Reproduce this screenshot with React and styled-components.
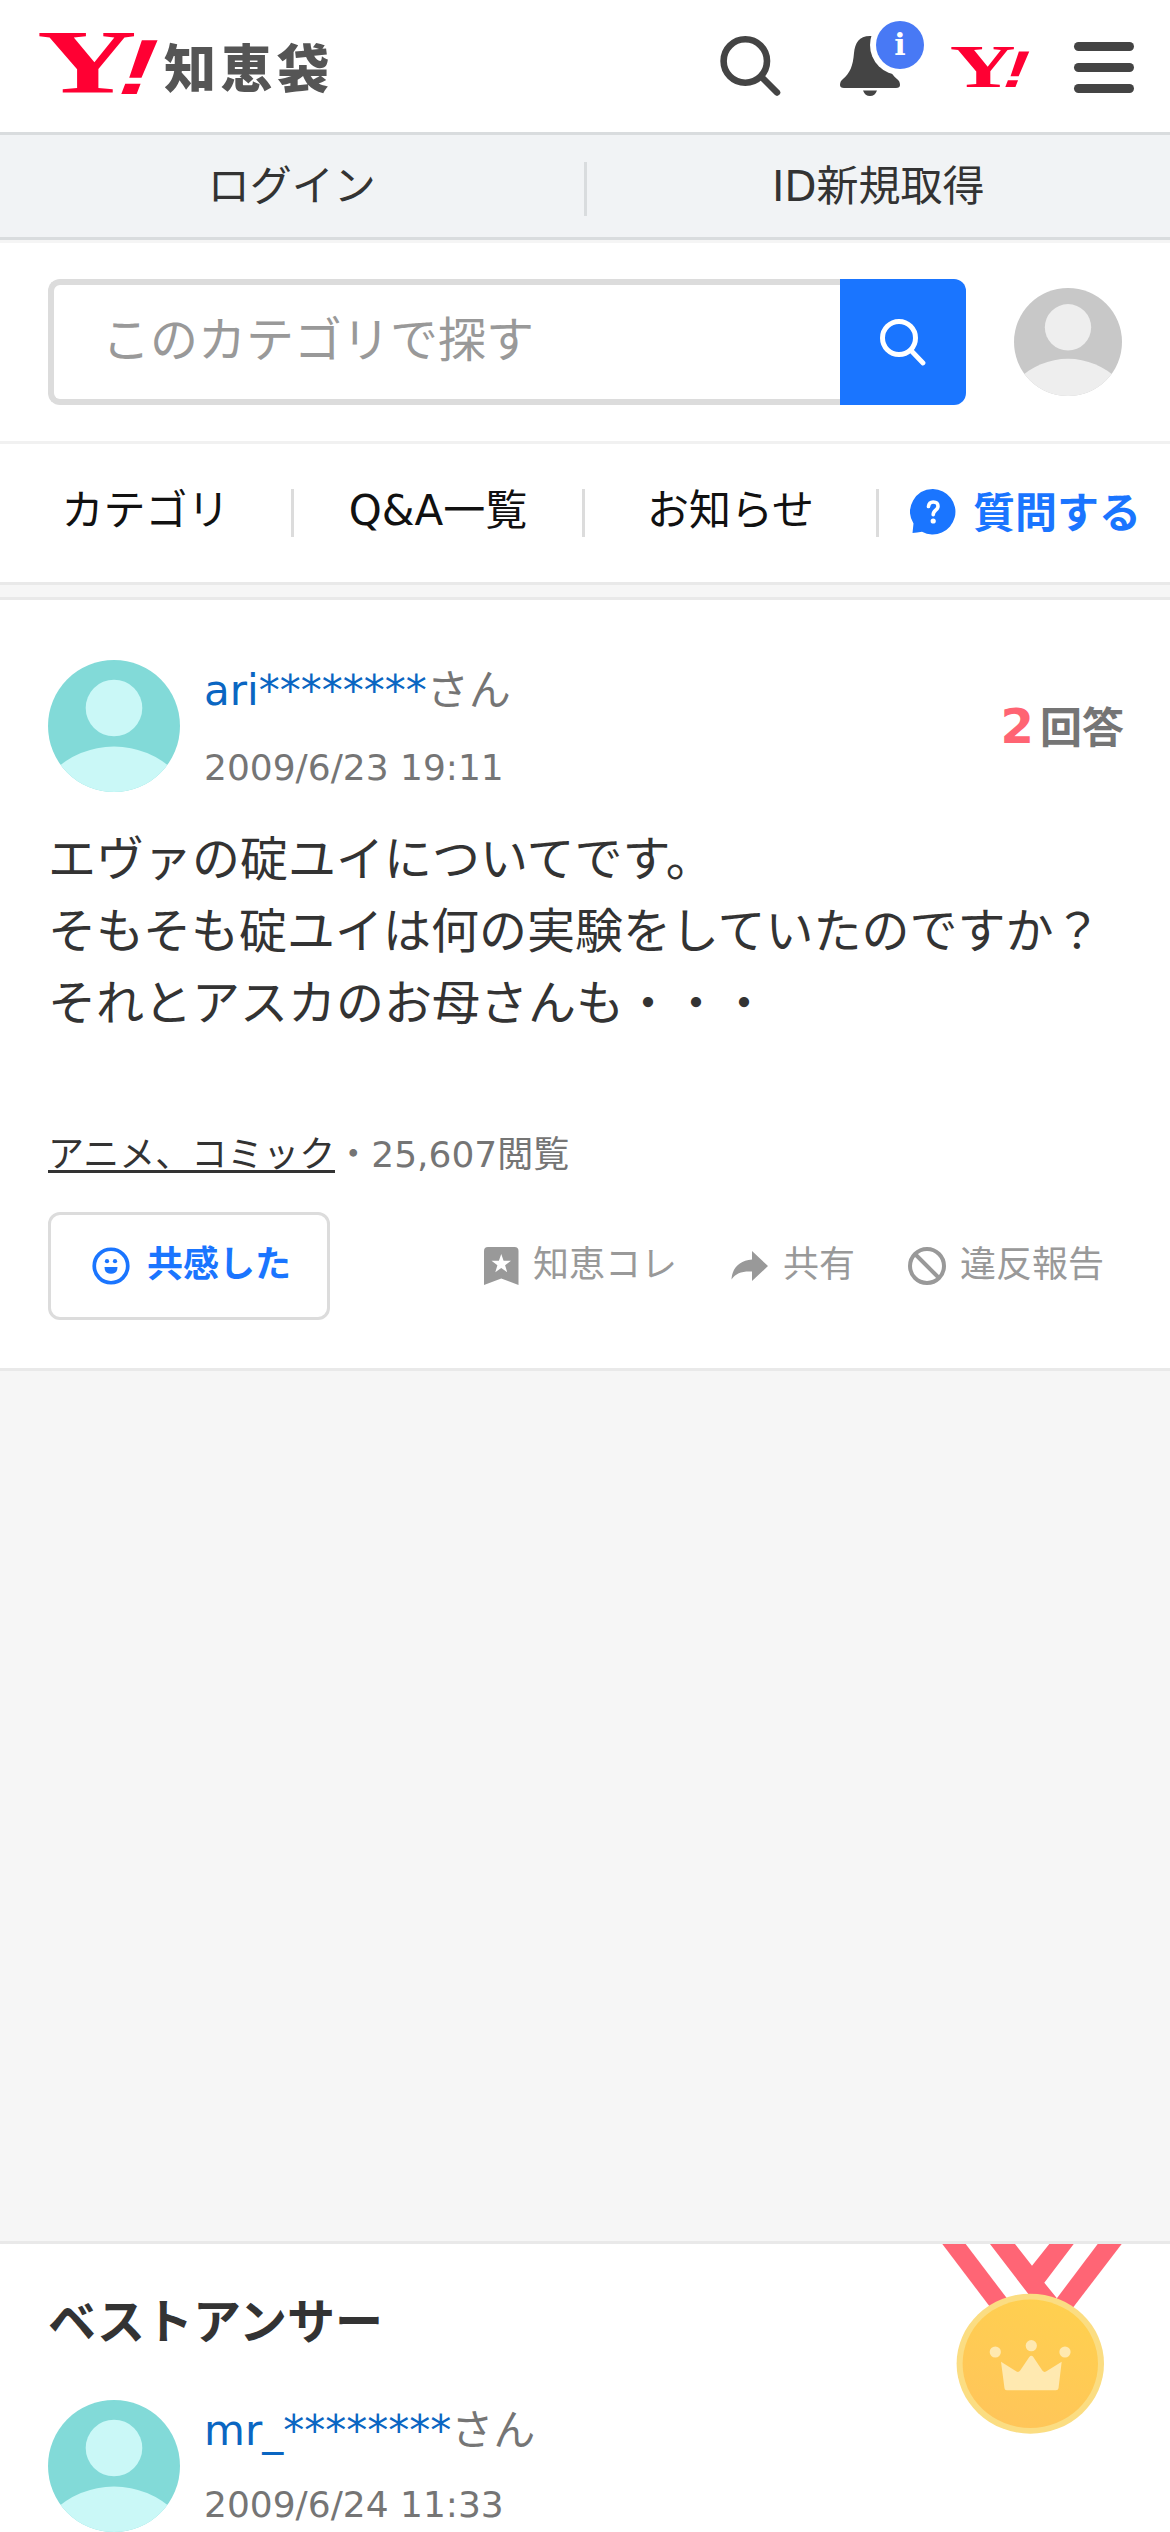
import React from "react";
import styled, { createGlobalStyle } from "styled-components";

const GlobalStyle = createGlobalStyle`
  * {
    box-sizing: border-box;
  }

  body {
    margin: 0;
    background-color: #f6f6f6;
    color: #333;
    font-family: "DejaVu Sans", "Noto Sans CJK JP", sans-serif;
  }
`;

const Page = styled.div`
  width: 1170px;
  height: 2532px;
  overflow: hidden;
`;

const Header = styled.header`
  display: flex;
  justify-content: space-between;
  height: 135px;
  padding: 0 36px 0 39px;
  background-color: #fff;
  border-bottom: 3px solid #d9dcde;
`;

const Logo = styled.div`
  display: flex;
  align-items: flex-start;
  padding-top: 30px;
`;

const Mark = styled.svg`
  display: block;
  overflow: visible;
`;

const LogoName = styled.span`
  margin-left: 7px;
  padding-top: 4px;
  color: #555;
  font-size: 52px;
  font-weight: 900;
  letter-spacing: 4.5px;
  line-height: 72px;
`;

const HeaderIcons = styled.div`
  display: flex;
  align-items: flex-start;
`;

const HeaderIcon = styled.svg`
  display: block;
  margin-left: ${(props) => props.$left}px;
  overflow: visible;
`;

const HeaderMark = styled.a`
  display: block;
  margin-left: 27px;
  padding-top: 45px;
`;

const LoginBar = styled.div`
  display: flex;
  align-items: center;
  height: 105px;
  padding-top: 6px;
  background-color: #f1f3f5;
  border-bottom: 3px solid #d9dcde;
`;

const LoginLink = styled.a`
  flex: 1;
  padding-bottom: 5px;
  font-size: 42px;
  line-height: 49px;
  text-align: center;
  border-left: ${(props) => (props.$divider ? "3px solid #d9dcde" : "0")};
`;

const SearchArea = styled.div`
  display: flex;
  align-items: center;
  height: 204px;
  padding: 0 48px;
  background-color: #fff;
  border-top: 3px solid #f5f5f5;
  border-bottom: 3px solid #f1f1f1;
`;

const SearchInput = styled.input`
  width: 792px;
  height: 126px;
  padding: 0 0 5px 48px;
  border: 6px solid #dcdcdc;
  border-right: 0;
  border-radius: 12px 0 0 12px;
  background-color: #fff;
  font-family: inherit;
  font-size: 48px;

  &::placeholder {
    color: #999;
    opacity: 1;
  }
`;

const SearchButton = styled.button`
  display: flex;
  align-items: center;
  justify-content: center;
  width: 126px;
  height: 126px;
  margin-right: 48px;
  padding: 0;
  border: 0;
  border-radius: 0 12px 12px 0;
  background-color: #1a75ff;
`;

const Nav = styled.nav`
  display: flex;
  align-items: center;
  height: 141px;
  background-color: #fff;
  border-bottom: 3px solid #e9e9e9;
`;

const NavItem = styled.a`
  width: ${(props) => props.$width}px;
  padding-bottom: 5px;
  color: #111;
  font-size: 42px;
  line-height: 60px;
  text-align: center;
`;

const NavDivider = styled.span`
  width: 3px;
  height: 48px;
  background-color: #dcdcdc;
`;

const AskLink = styled.a`
  display: flex;
  align-items: center;
  gap: 17px;
  padding: 0 0 3px 31px;
  color: #1a75ff;
  font-size: 42px;
  font-weight: bold;
  line-height: 60px;

  span {
    padding-top: 5px;
  }
`;

const Card = styled.section`
  height: ${(props) => props.$height}px;
  margin-top: ${(props) => props.$gap}px;
  padding: 0 48px;
  background-color: #fff;
  border-top: 3px solid #e9e9e9;
  border-bottom: 3px solid #e9e9e9;
`;

const UserRow = styled.div`
  display: flex;
  padding-top: ${(props) => props.$top}px;
`;

const UserInfo = styled.div`
  flex: 1;
  margin-left: 24px;
`;

const UserName = styled.p`
  margin: 0;
  color: #757575;
  font-size: 42px;
  line-height: 61px;

  a {
    color: #0a66c2;
  }
`;

const PostDate = styled.p`
  margin: ${(props) => props.$top}px 0 0;
  color: #757575;
  font-size: 36px;
  line-height: 54px;
`;

const AnswerCount = styled.p`
  margin: 35px -2px 0 0;
  color: #757575;
  font-size: 42px;
  font-weight: bold;
  line-height: 63px;

  strong {
    margin-right: 6px;
    color: #ff6473;
    font-size: 48px;
  }
`;

const Question = styled.h1`
  margin: 28px 0 0;
  font-size: 48px;
  font-weight: normal;
  line-height: 72px;
`;

const Category = styled.p`
  margin: 89px 0 0;
  color: #757575;
  font-size: 36px;
  line-height: 54px;

  a {
    display: inline-block;
    height: 45px;
    color: #333;
    border-bottom: 3px solid #333;
  }
`;

const Actions = styled.div`
  display: flex;
  align-items: center;
  margin-top: 30px;
`;

const EmpathyButton = styled.button`
  display: flex;
  align-items: center;
  width: 282px;
  height: 108px;
  padding: 0 0 0 41px;
  border: 3px solid #dcdcdc;
  border-radius: 12px;
  background-color: #fff;
  color: #1a75ff;
  font-family: inherit;
  font-size: 36px;
  font-weight: bold;
  line-height: 54px;

  svg {
    margin-right: 17px;
  }

  span {
    padding-bottom: 2px;
  }
`;

const Action = styled.a`
  display: flex;
  align-items: center;
  margin-left: ${(props) => props.$left}px;
  color: #999;
  font-size: 36px;
  line-height: 54px;

  svg {
    margin-right: 14px;
  }

  span {
    padding-bottom: 2px;
  }
`;

const BestAnswerHead = styled.div`
  display: flex;
  justify-content: space-between;
  height: 156px;
`;

const BestAnswerTitle = styled.h2`
  margin: 42px 0 0;
  font-size: 48px;
  line-height: 72px;
`;

const Medal = styled.svg`
  display: block;
  margin-right: -6px;
  overflow: visible;
`;

// the letters are real text, only stretched to the proportions of the mark
const YahooMark = ({ width, height }) => (
  <Mark width={width} height={height} viewBox="0 0 118 66" fill="#ff0033">
    <text
      transform="translate(-2 63) scale(1.5 1)"
      fontFamily="Liberation Serif"
      fontWeight="bold"
      fontSize="92"
    >
      Y
    </text>
    <text
      transform="translate(72 64) skewX(-21) scale(1.4 1)"
      fontFamily="Liberation Sans"
      fontWeight="bold"
      fontSize="78"
    >
      !
    </text>
  </Mark>
);

const Avatar = ({ size, color, face, id }) => (
  <svg width={size} height={size} viewBox="0 0 132 132">
    <clipPath id={id}>
      <circle cx="66" cy="66" r="66" />
    </clipPath>
    <g clipPath={`url(#${id})`}>
      <rect width="132" height="132" fill={color} />
      <circle cx="66" cy="48" r="28.3" fill={face} />
      <circle cx="66" cy="173" r="86.5" fill={face} />
    </g>
  </svg>
);

const User = ({ id, name, date, top, dateTop, children }) => (
  <UserRow $top={top}>
    <Avatar id={id} size={132} color="#82dad8" face="#caf8f7" />
    <UserInfo>
      <UserName>
        <a>{name}</a>さん
      </UserName>
      <PostDate $top={dateTop}>{date}</PostDate>
    </UserInfo>
    {children}
  </UserRow>
);

export default function App() {
  return (
    <Page>
      <GlobalStyle />

      <Header>
        <Logo>
          <YahooMark width={118} height={66} />
          <LogoName>知恵袋</LogoName>
        </Logo>
        <HeaderIcons>
          <HeaderIcon $left={0} width="60" height="132" fill="none" stroke="#444">
            <circle cx="25.3" cy="61" r="21.7" strokeWidth="6.6" />
            <path d="M42 77.500L57 92.500" strokeWidth="6.500" strokeLinecap="round" />
          </HeaderIcon>
          <HeaderIcon $left={60} width="84" height="132">
            <path
              d="M30 36C19 36 15 43 14 53C13 66 10 73 3 79Q0 81 0 85Q0 88 4 88H56Q60 88 60 85Q60 81 57 79C50 73 47 66 46 53C45 43 41 36 30 36Z"
              fill="#444"
            />
            <path d="M23 90.500H37Q35 96 30 96Q25 96 23 90.500Z" fill="#444" />
            <circle cx="60" cy="45" r="30" fill="#fff" />
            <circle cx="60" cy="45" r="24" fill="#4879f5" />
            <text
              x="60"
              y="55"
              fill="#fff"
              fontFamily="DejaVu Serif"
              fontWeight="bold"
              fontSize="30"
              textAnchor="middle"
            >
              i
            </text>
          </HeaderIcon>
          <HeaderMark>
            <YahooMark width={78} height={44} />
          </HeaderMark>
          <HeaderIcon $left={45} width="60" height="132" fill="#444">
            <rect y="42" width="60" height="9" rx="4.5" />
            <rect y="63" width="60" height="9" rx="4.5" />
            <rect y="84" width="60" height="9" rx="4.5" />
          </HeaderIcon>
        </HeaderIcons>
      </Header>

      <LoginBar>
        <LoginLink>ログイン</LoginLink>
        <LoginLink $divider>ID新規取得</LoginLink>
      </LoginBar>

      <SearchArea>
        <SearchInput placeholder="このカテゴリで探す" />
        <SearchButton>
          <svg width="46" height="50" fill="none" stroke="#fff">
            <circle cx="19" cy="21" r="16.500" strokeWidth="5" />
            <path d="M31.500 34L43 46" strokeWidth="4.800" strokeLinecap="round" />
          </svg>
        </SearchButton>
        <Avatar id="me" size={108} color="#c8c8c8" face="#eeeeee" />
      </SearchArea>

      <Nav>
        <NavItem $width={291}>カテゴリ</NavItem>
        <NavDivider />
        <NavItem $width={288}>Q&amp;A一覧</NavItem>
        <NavDivider />
        <NavItem $width={291}>お知らせ</NavItem>
        <NavDivider />
        <AskLink>
          <svg width="46" height="46" viewBox="0 0 46 46">
            <path
              d="M23 0A22.700 22.700 0 1 1 12 42.700Q7 43.500 2.500 44L3.500 34.500A22.700 22.700 0 0 1 23 0Z"
              fill="#1a75ff"
            />
            <path
              d="M18.500 17.500Q19 13 23.200 13Q28 13 28 17.200Q28 19.500 25.600 21.200Q23.200 23 23.200 25.800"
              fill="none"
              stroke="#fff"
              strokeWidth="3.6"
              strokeLinecap="round"
            />
            <circle cx="23.2" cy="32" r="2.6" fill="#fff" />
          </svg>
          <span>質問する</span>
        </AskLink>
      </Nav>

      <Card $gap={12} $height={774}>
        <User
          id="asker"
          name="ari********"
          date="2009/6/23 19:11"
          top={60}
          dateTop={20}
        >
          <AnswerCount>
            <strong>2</strong>回答
          </AnswerCount>
        </User>

        <Question>
          エヴァの碇ユイについてです。
          <br />
          そもそも碇ユイは何の実験をしていたのですか？
          <br />
          それとアスカのお母さんも・・・
        </Question>

        <Category>
          <a>アニメ、コミック</a>・25,607閲覧
        </Category>

        <Actions>
          <EmpathyButton>
            <svg width="38" height="38" viewBox="0 0 39 39">
              <circle cx="19.500" cy="19.500" r="17.200" fill="none" stroke="#1a75ff" strokeWidth="3.800" />
              <circle cx="15.4" cy="14.5" r="2.2" fill="#1a75ff" />
              <circle cx="23.6" cy="14.5" r="2.2" fill="#1a75ff" />
              <path d="M12.800 20.500H26.200Q26.200 27.500 19.500 27.500Q12.800 27.500 12.800 20.500Z" fill="#1a75ff" />
            </svg>
            <span>共感した</span>
          </EmpathyButton>

          <Action $left={154}>
            <svg width="35" height="38" viewBox="0 0 35 38">
              <path
                d="M4 0H30.500Q34.500 0 34.500 4V38L17.250 31.500L0 38V4Q0 0 4 0ZM17.250 7L14.900 13.800H7.500L13.400 18.200L11.300 25.200L17.250 21L23.200 25.200L21.100 18.200L27 13.800H19.600Z"
                fill="#999"
                fillRule="evenodd"
              />
            </svg>
            <span>知恵コレ</span>
          </Action>

          <Action $left={54}>
            <svg width="38" height="30" viewBox="0 0 38 30">
              <path d="M21 0L37 15L21 30V20.500C11 20 5 22 0.500 28.500C1 17.500 8 9.500 21 8.500Z" fill="#999" />
            </svg>
            <span>共有</span>
          </Action>

          <Action $left={53}>
            <svg width="38" height="38" viewBox="0 0 38 38" fill="none" stroke="#999" strokeWidth="4">
              <circle cx="19" cy="19" r="17" />
              <path d="M7 7L31 31" />
            </svg>
            <span>違反報告</span>
          </Action>
        </Actions>
      </Card>

      <Card $gap={870} $height={340}>
        <BestAnswerHead>
          <BestAnswerTitle>ベストアンサー</BestAnswerTitle>
          <Medal width="192" height="190" viewBox="0 0 192 190">
            <defs>
              <linearGradient id="gold" x1="0.7" y1="0" x2="0.3" y2="1">
                <stop offset="0" stopColor="#ffd04f" />
                <stop offset="1" stopColor="#ffc55a" />
              </linearGradient>
            </defs>
            <g fill="#ff6575">
              <path d="M6.300 0H29.700L76 61L53.300 62Z" />
              <path d="M54 0H79L96 21.700L113.300 0H137.700L108.300 38.700L120.700 54L100 60Z" />
              <path d="M161.700 0H185.700L136.700 64L112 66Z" />
            </g>
            <ellipse cx="94.3" cy="119.7" rx="73.7" ry="70" fill="#fbdd82" />
            <ellipse cx="94.3" cy="119.7" rx="67.700" ry="64.2" fill="url(#gold)" />
            <g fill="#ffe9b0">
              <circle cx="59.3" cy="108" r="5.6" />
              <circle cx="95.3" cy="101.7" r="5.6" />
              <circle cx="129" cy="108" r="5.6" />
              <path d="M65 117.700L80.500 127.500Q82.500 128.600 84 126.800L93.300 113Q95.300 110.500 97.300 113L106.500 126.800Q108 128.600 110 127.500L125.700 117.700L122.500 144.300Q122.200 146.300 120 146.300H70.700Q68.700 146.300 68.500 144.300Z" />
            </g>
          </Medal>
        </BestAnswerHead>

        <User
          id="answerer"
          name="mr_********"
          date="2009/6/24 11:33"
          top={0}
          dateTop={17}
        />
      </Card>
    </Page>
  );
}
